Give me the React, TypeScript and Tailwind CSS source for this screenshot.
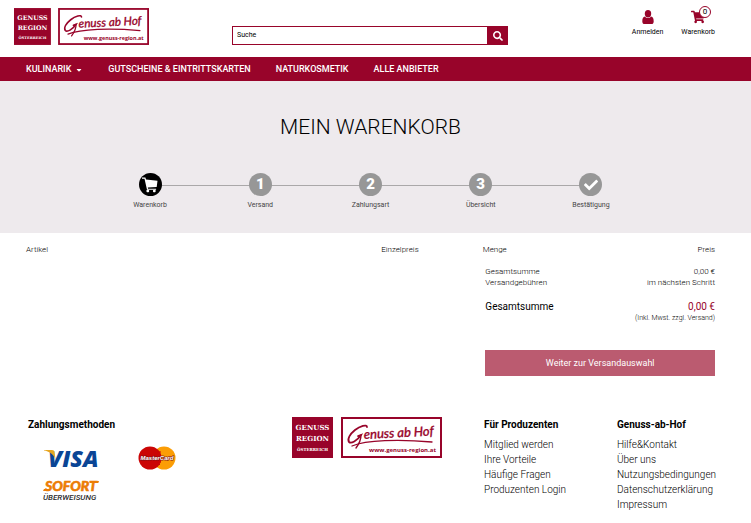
import type { ReactNode } from 'react'
import { FaCaretDown, FaCheck, FaSearch, FaShoppingCart } from 'react-icons/fa'

const NAV = ['GUTSCHEINE & EINTRITTSKARTEN', 'NATURKOSMETIK', 'ALLE ANBIETER']

const PRODUCER_LINKS = ['Mitglied werden', 'Ihre Vorteile', 'Häufige Fragen', 'Produzenten Login']

const SHOP_LINKS = [
  'Hilfe&Kontakt',
  'Über uns',
  'Nutzungsbedingungen',
  'Datenschutzerklärung',
  'Impressum',
]

function Logo({ className }: { className: string }) {
  return (
    <svg viewBox="0 0 150 41" className={className} role="img" aria-label="Genuss Region Österreich">
      <rect width="41" height="41" fill="#98042a" />
      <g fill="#fff" fontFamily="'DejaVu Serif', serif" fontWeight="700">
        <text x="20.5" y="13" fontSize="7" textAnchor="middle">GENUSS</text>
        <text x="20.5" y="24" fontSize="7" textAnchor="middle">REGION</text>
        <text x="20.5" y="34" fontSize="4" textAnchor="middle">ÖSTERREICH</text>
      </g>
      <rect x="50" y="1" width="99" height="39" fill="#fff" stroke="#98042a" strokeWidth="2" />
      <g fill="none" stroke="#98042a" strokeLinecap="round">
        {/* big loop of the initial, then the underline swash */}
        <path d="M75 10c0-3-7-1-12 3-5 4-8 9-6 12 2 2 8-1 12-7l-3 1" strokeWidth="1.8" />
        <path d="M69 18c0 4-2 9-5 13" strokeWidth="1.4" />
        <path d="M60 29c14-6 47-7 80-4" strokeWidth="1.3" />
      </g>
      <g fill="#98042a">
        <text
          x="72"
          y="22"
          fontSize="13"
          fontWeight="500"
          fontStyle="italic"
          fontFamily="Lato, sans-serif"
          stroke="#98042a"
          strokeWidth="0.3"
          transform="rotate(-3 72 22)"
        >
          enuss ab Hof
        </text>
        <text x="144" y="35" fontSize="6" fontWeight="700" textAnchor="end" fontFamily="'Open Sans', sans-serif">
          www.genuss-region.at
        </text>
      </g>
    </svg>
  )
}

function UserIcon() {
  return (
    <svg viewBox="0 0 12 14" className="h-3.5 w-3" fill="#98042a" aria-hidden="true">
      <ellipse cx="6" cy="3.7" rx="3.2" ry="3.7" />
      <path d="M3 6.6C1 7 .3 8.8.3 11.4.3 13 1.2 14 2.6 14h6.8c1.4 0 2.3-1 2.3-2.6C11.7 8.8 11 7 9 6.6 7.5 8.6 4.500 8.600 3 6.600z" />
    </svg>
  )
}

function StepCartIcon() {
  return (
    <svg viewBox="0 0 16 16" className="size-4" fill="#fff" aria-hidden="true">
      <path d="M0 .5h3.400l.6 2 11.500 1.200-.8 6.300-8.900.6.3 1.200h8v1H5L2.500 1.700H0z" />
      <rect x="4.500" y="12.800" width="2.600" height="2.400" rx=".8" />
      <rect x="11" y="12.800" width="2.600" height="2.400" rx=".8" />
    </svg>
  )
}

function VisaLogo() {
  return (
    <svg viewBox="0 0 54 19" className="h-[19px] w-[54px] overflow-visible" role="img" aria-label="Visa">
      <text
        x="4"
        y="18"
        fontSize="23"
        fontWeight="800"
        fontStyle="italic"
        fontFamily="'Open Sans', sans-serif"
        fill="#0a4595"
      >
        VISA
      </text>
      <path d="M0 1h8c1.500 0 2.300.7 2.500 2l1 7C9 5 5 2.300 0 1.600z" fill="#e7a621" />
    </svg>
  )
}

function MasterCardLogo() {
  return (
    <svg viewBox="0 0 38 24" className="h-6 w-[38px] overflow-visible" role="img" aria-label="MasterCard">
      <circle cx="26" cy="12" r="11.500" fill="#fb9d05" />
      <circle cx="12" cy="12" r="11.500" fill="#cb0505" />
      <path d="M19 6h4M19 8.500h4M19 16h4M19 18.500h3" stroke="#cb0505" strokeWidth="1" fill="none" />
      <text
        x="19"
        y="14"
        fontSize="6"
        fontWeight="700"
        fontStyle="italic"
        textAnchor="middle"
        fontFamily="'Liberation Sans', sans-serif"
        fill="#fff"
        stroke="#7d1018"
        strokeWidth="1"
        paintOrder="stroke"
      >
        MasterCard
      </text>
    </svg>
  )
}

function SofortLogo() {
  return (
    <svg viewBox="0 0 56 21" className="h-[21px] w-14 overflow-visible" role="img" aria-label="Sofort Überweisung">
      <text
        x="2"
        y="10"
        fontSize="14"
        fontWeight="900"
        fontStyle="italic"
        fontFamily="Lato, sans-serif"
        fill="#ec7c05"
        stroke="#ec7c05"
        strokeWidth="0.6"
      >
        SOFORT
      </text>
      <path d="M1 8h6l-.6 2H0zM47 0h9l-.7 2H47z" fill="#ec7c05" />
      <text
        x="0"
        y="19"
        fontSize="8"
        fontWeight="500"
        fontStyle="italic"
        fontFamily="Roboto, sans-serif"
        fill="#2a2a2a"
      >
        ÜBERWEISUNG
      </text>
    </svg>
  )
}

function Step({ label, active, last, children }: { label: string; active?: boolean; last?: boolean; children: ReactNode }) {
  return (
    <li className="relative flex flex-col items-center">
      {!last && <span className="absolute top-3 left-1/2 h-px w-full bg-[#aaa8a9]" />}
      <span
        className={
          active
            ? 'relative flex size-[23px] items-center justify-center rounded-full bg-black text-white'
            : 'relative flex size-[23px] items-center justify-center rounded-full bg-[#979797] text-white'
        }
      >
        {children}
      </span>
      <span className="mt-[3px] text-[7px] leading-3 text-[#444]">{label}</span>
    </li>
  )
}

function FooterLinks({ title, links }: { title: string; links: string[] }) {
  return (
    <div className="min-w-0">
      <h2 className="text-[10px] leading-4 font-bold">{title}</h2>
      <ul className="mt-1 text-[10px] leading-[15px] font-light whitespace-nowrap">
        {links.map((link) => (
          <li key={link}>
            <a href="#">{link}</a>
          </li>
        ))}
      </ul>
    </div>
  )
}

export default function App() {
  return (
    <div className="bg-white font-[Roboto,sans-serif] text-black">
      <header className="flex h-[57px] items-start pt-2 pr-9 pl-3.5">
        <a href="#" className="shrink-0">
          <Logo className="h-[37px] w-[135px]" />
        </a>
        <form className="mt-[18px] ml-[83px] flex h-[19px] w-[276px]">
          <input
            type="text"
            aria-label="Suche"
            placeholder="Suche"
            className="min-w-0 flex-1 border border-[#98042a] px-1 text-[7px] outline-none placeholder:text-black"
          />
          <button
            type="button"
            aria-label="Suchen"
            className="flex w-5 items-center justify-center bg-[#98042a] text-white"
          >
            <FaSearch size={10} />
          </button>
        </form>
        <div className="ml-auto flex gap-[18px] pt-0.5 text-[7px] leading-3">
          <a href="#" className="flex flex-col items-center gap-0.5">
            <UserIcon />
            Anmelden
          </a>
          <a href="#" className="relative flex flex-col items-center gap-0.5">
            <FaShoppingCart size={14} color="#98042a" />
            Warenkorb
            <span className="absolute -top-1 right-1 flex size-3 items-center justify-center rounded-full border border-[#98042a] bg-white text-[8px]">
              0
            </span>
          </a>
        </div>
      </header>

      <nav className="flex h-6 items-center gap-[25px] bg-[#98042a] pt-0.5 pl-[26px] text-[9px] font-medium text-white">
        <a href="#" className="flex items-center gap-1">
          KULINARIK
          <FaCaretDown size={8} />
        </a>
        {NAV.map((item) => (
          <a key={item} href="#">
            {item}
          </a>
        ))}
      </nav>

      <section className="bg-[#eeeaed] pt-8 pr-9 pb-[22px] pl-[26px]">
        <h1 className="text-center text-[21px] leading-7 font-light">MEIN WARENKORB</h1>
        <ol className="mx-auto mt-8 grid w-4/5 grid-cols-5">
          <Step label="Warenkorb" active>
            <StepCartIcon />
          </Step>
          <Step label="Versand">
            <span className="text-[15px] font-black">1</span>
          </Step>
          <Step label="Zahlungsart">
            <span className="text-[15px] font-black">2</span>
          </Step>
          <Step label="Übersicht">
            <span className="text-[15px] font-black">3</span>
          </Step>
          <Step label="Bestätigung" last>
            <FaCheck size={14} />
          </Step>
        </ol>
      </section>

      <main className="pt-[11px] pr-9 pl-[26px] font-light">
        <table className="w-full table-fixed text-[8px] leading-[11px]">
          <thead>
            <tr>
              <th className="w-[40%] text-left font-light">Artikel</th>
              <th className="w-[17%] text-right font-light">Einzelpreis</th>
              <th className="pl-16 text-left font-light">Menge</th>
              <th className="w-[20%] text-right font-light">Preis</th>
            </tr>
          </thead>
        </table>

        <section className="mt-[11px] ml-auto w-1/3">
          <dl className="text-[8px] leading-[11px]">
            <div className="flex justify-between">
              <dt>Gesamtsumme</dt>
              <dd>0,00 €</dd>
            </div>
            <div className="flex justify-between">
              <dt>Versandgebühren</dt>
              <dd>im nächsten Schritt</dd>
            </div>
            <div className="mt-3 flex justify-between text-[10px] leading-[14px] font-normal">
              <dt>Gesamtsumme</dt>
              <dd className="text-[#98042a]">0,00 €</dd>
            </div>
          </dl>
          <p className="text-right text-[7px] leading-2">(Inkl. Mwst. zzgl. Versand)</p>
          <button type="button" className="mt-7 h-[26px] w-full bg-[#bb5b70] pt-px text-[9px] font-normal text-white">
            Weiter zur Versandauswahl
          </button>
        </section>
      </main>

      <footer className="mt-[41px] grid grid-cols-[264fr_192fr_133fr_106fr] pr-7 pl-7">
        <div className="min-w-0">
          <h2 className="text-[10px] leading-4 font-bold">Zahlungsmethoden</h2>
          <div className="mt-[13px] grid grid-cols-[86px_86px] items-center justify-items-center gap-y-[11px]">
            <VisaLogo />
            <MasterCardLogo />
            <SofortLogo />
          </div>
        </div>
        <a href="#" className="justify-self-start">
          <Logo className="h-[41px] w-[150px]" />
        </a>
        <FooterLinks title="Für Produzenten" links={PRODUCER_LINKS} />
        <FooterLinks title="Genuss-ab-Hof" links={SHOP_LINKS} />
      </footer>
    </div>
  )
}
